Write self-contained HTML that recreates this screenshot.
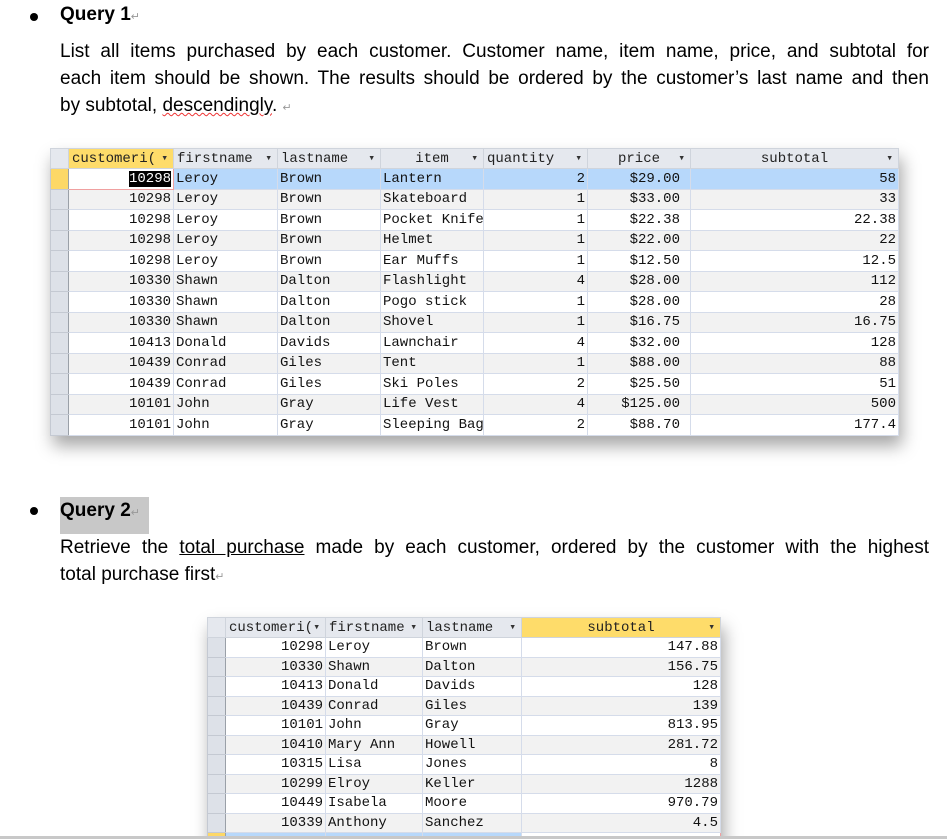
<!DOCTYPE html>
<html style="overflow:hidden;height:839px"><head><meta charset="utf-8">
<style>
body{margin:0;width:947px;height:839px;overflow:hidden;background:#fff;position:relative;font-family:"Liberation Sans",Arial,sans-serif;color:#000}
.abs{position:absolute}
.bul{position:absolute;left:30px;width:8px;height:8px;border-radius:50%;background:#000}
.h{position:absolute;left:60px;font-weight:bold;font-size:19px}
.p{position:absolute;left:60px;width:869px;font-size:19px;line-height:27px}
.j{text-align:justify;text-align-last:justify;height:27px;white-space:nowrap;overflow:hidden}
.pm{color:#999;font-size:11px;font-weight:normal}
table{border-collapse:collapse;table-layout:fixed;font-family:"Liberation Mono","DejaVu Sans Mono",monospace;font-size:14px;position:absolute}
td{border:1px solid #d5dcea;padding:0 2px;white-space:nowrap;overflow:hidden;color:#111}
td.r{text-align:right}
td.sel{background:#dde1e8;border-color:#c4c9d2;border-right:1px solid #9aa0a8}
th{font-weight:normal;background:#e5e8ee;border:1px solid #cfd4dc;color:#222;text-align:left;padding:0 3px;position:relative;white-space:nowrap;overflow:hidden}
th .dd{position:absolute;right:5px;top:0;line-height:20px;font-size:11px;color:#333}
tr.alt td{background:#f2f2f2}
tr.alt td.sel{background:#dde1e8}
.shadow{position:absolute;box-shadow:3px 10px 16px rgba(0,0,0,.35)}
</style></head><body>
<div class="bul" style="top:13px"></div>
<div class="h" style="top:4px">Query 1<span class="pm">↵</span></div>
<div class="p" style="top:38px">
<div class="j">List all items purchased by each customer. Customer name, item name, price, and subtotal for</div>
<div class="j">each item should be shown. The results should be ordered by the customer’s last name and then</div>
<div style="height:27px">by subtotal, <span style="text-decoration:underline wavy #e33;text-decoration-thickness:1px">descendingly</span>. <span class="pm">↵</span></div>
</div>

<div class="shadow" style="left:50px;top:148px;width:849px;height:288px"></div>
<table style="left:50px;top:148px;width:849px;background:#fff">
<colgroup><col style="width:18px"><col style="width:105px"><col style="width:104px"><col style="width:103px"><col style="width:103px"><col style="width:104px"><col style="width:103px"><col></colgroup>
<tr style="height:20px"><th style="background:#e5e8ee"></th><th style="background:#fedc6a">customeri(<span class="dd">▾</span></th><th>firstname<span class="dd">▾</span></th><th>lastname<span class="dd">▾</span></th><th style="text-align:center">item<span class="dd">▾</span></th><th>quantity<span class="dd">▾</span></th><th style="text-align:center">price<span class="dd">▾</span></th><th style="text-align:center">subtotal<span class="dd">▾</span></th></tr>
<tr style="height:20.5px"><td class="sel" style="background:#fdd867"></td><td class="r" style="border:1px solid #f0a0a0;background:#fff"><span style="background:#000;color:#fff">10298</span></td><td style="background:#b7d8fb">Leroy</td><td style="background:#b7d8fb">Brown</td><td style="background:#b7d8fb">Lantern</td><td class="r" style="background:#b7d8fb">2</td><td class="r" style="background:#b7d8fb;padding-right:10px">$29.00</td><td class="r" style="background:#b7d8fb">58</td></tr>
<tr class="alt" style="height:20.5px"><td class="sel"></td><td class="r">10298</td><td>Leroy</td><td>Brown</td><td>Skateboard</td><td class="r">1</td><td class="r" style="padding-right:10px">$33.00</td><td class="r">33</td></tr>
<tr style="height:20.5px"><td class="sel"></td><td class="r">10298</td><td>Leroy</td><td>Brown</td><td>Pocket Knife</td><td class="r">1</td><td class="r" style="padding-right:10px">$22.38</td><td class="r">22.38</td></tr>
<tr class="alt" style="height:20.5px"><td class="sel"></td><td class="r">10298</td><td>Leroy</td><td>Brown</td><td>Helmet</td><td class="r">1</td><td class="r" style="padding-right:10px">$22.00</td><td class="r">22</td></tr>
<tr style="height:20.5px"><td class="sel"></td><td class="r">10298</td><td>Leroy</td><td>Brown</td><td>Ear Muffs</td><td class="r">1</td><td class="r" style="padding-right:10px">$12.50</td><td class="r">12.5</td></tr>
<tr class="alt" style="height:20.5px"><td class="sel"></td><td class="r">10330</td><td>Shawn</td><td>Dalton</td><td>Flashlight</td><td class="r">4</td><td class="r" style="padding-right:10px">$28.00</td><td class="r">112</td></tr>
<tr style="height:20.5px"><td class="sel"></td><td class="r">10330</td><td>Shawn</td><td>Dalton</td><td>Pogo stick</td><td class="r">1</td><td class="r" style="padding-right:10px">$28.00</td><td class="r">28</td></tr>
<tr class="alt" style="height:20.5px"><td class="sel"></td><td class="r">10330</td><td>Shawn</td><td>Dalton</td><td>Shovel</td><td class="r">1</td><td class="r" style="padding-right:10px">$16.75</td><td class="r">16.75</td></tr>
<tr style="height:20.5px"><td class="sel"></td><td class="r">10413</td><td>Donald</td><td>Davids</td><td>Lawnchair</td><td class="r">4</td><td class="r" style="padding-right:10px">$32.00</td><td class="r">128</td></tr>
<tr class="alt" style="height:20.5px"><td class="sel"></td><td class="r">10439</td><td>Conrad</td><td>Giles</td><td>Tent</td><td class="r">1</td><td class="r" style="padding-right:10px">$88.00</td><td class="r">88</td></tr>
<tr style="height:20.5px"><td class="sel"></td><td class="r">10439</td><td>Conrad</td><td>Giles</td><td>Ski Poles</td><td class="r">2</td><td class="r" style="padding-right:10px">$25.50</td><td class="r">51</td></tr>
<tr class="alt" style="height:20.5px"><td class="sel"></td><td class="r">10101</td><td>John</td><td>Gray</td><td>Life Vest</td><td class="r">4</td><td class="r" style="padding-right:10px">$125.00</td><td class="r">500</td></tr>
<tr style="height:20.5px"><td class="sel"></td><td class="r">10101</td><td>John</td><td>Gray</td><td>Sleeping Bag</td><td class="r">2</td><td class="r" style="padding-right:10px">$88.70</td><td class="r">177.4</td></tr>
</table>

<div class="bul" style="top:507px"></div>
<div class="abs" style="left:60px;top:497px;width:89px;height:37px;background:#c8c8c8"></div>
<div class="h" style="top:500px">Query 2<span class="pm">↵</span></div>
<div class="p" style="top:534px">
<div class="j">Retrieve the <span style="text-decoration:underline">total purchase</span> made by each customer, ordered by the customer with the highest</div>
<div style="height:27px">total purchase first<span class="pm">↵</span></div>
</div>

<div class="shadow" style="left:207px;top:617px;width:514px;height:230px"></div>
<table style="left:207px;top:617px;width:514px;background:#fff">
<colgroup><col style="width:18px"><col style="width:100px"><col style="width:97px"><col style="width:99px"><col></colgroup>
<tr style="height:20px"><th></th><th>customeri(<span class="dd">▾</span></th><th>firstname<span class="dd">▾</span></th><th>lastname<span class="dd">▾</span></th><th style="text-align:center;background:#fedc6a">subtotal<span class="dd">▾</span></th></tr>
<tr style="height:19.5px"><td class="sel"></td><td class="r">10298</td><td>Leroy</td><td>Brown</td><td class="r">147.88</td></tr>
<tr class="alt" style="height:19.5px"><td class="sel"></td><td class="r">10330</td><td>Shawn</td><td>Dalton</td><td class="r">156.75</td></tr>
<tr style="height:19.5px"><td class="sel"></td><td class="r">10413</td><td>Donald</td><td>Davids</td><td class="r">128</td></tr>
<tr class="alt" style="height:19.5px"><td class="sel"></td><td class="r">10439</td><td>Conrad</td><td>Giles</td><td class="r">139</td></tr>
<tr style="height:19.5px"><td class="sel"></td><td class="r">10101</td><td>John</td><td>Gray</td><td class="r">813.95</td></tr>
<tr class="alt" style="height:19.5px"><td class="sel"></td><td class="r">10410</td><td>Mary Ann</td><td>Howell</td><td class="r">281.72</td></tr>
<tr style="height:19.5px"><td class="sel"></td><td class="r">10315</td><td>Lisa</td><td>Jones</td><td class="r">8</td></tr>
<tr class="alt" style="height:19.5px"><td class="sel"></td><td class="r">10299</td><td>Elroy</td><td>Keller</td><td class="r">1288</td></tr>
<tr style="height:19.5px"><td class="sel"></td><td class="r">10449</td><td>Isabela</td><td>Moore</td><td class="r">970.79</td></tr>
<tr class="alt" style="height:19.5px"><td class="sel"></td><td class="r">10339</td><td>Anthony</td><td>Sanchez</td><td class="r">4.5</td></tr>
<tr style="height:19.5px"><td class="sel" style="background:#fdd867"></td><td class="r" style="background:#b7d8fb"></td><td style="background:#b7d8fb"></td><td style="background:#b7d8fb"></td><td class="r" style="border:1px solid #f0a0a0"></td></tr>
</table>
<div class="abs" style="left:0;top:836px;width:947px;height:3px;background:#c8c8c8"></div>
</body></html>
